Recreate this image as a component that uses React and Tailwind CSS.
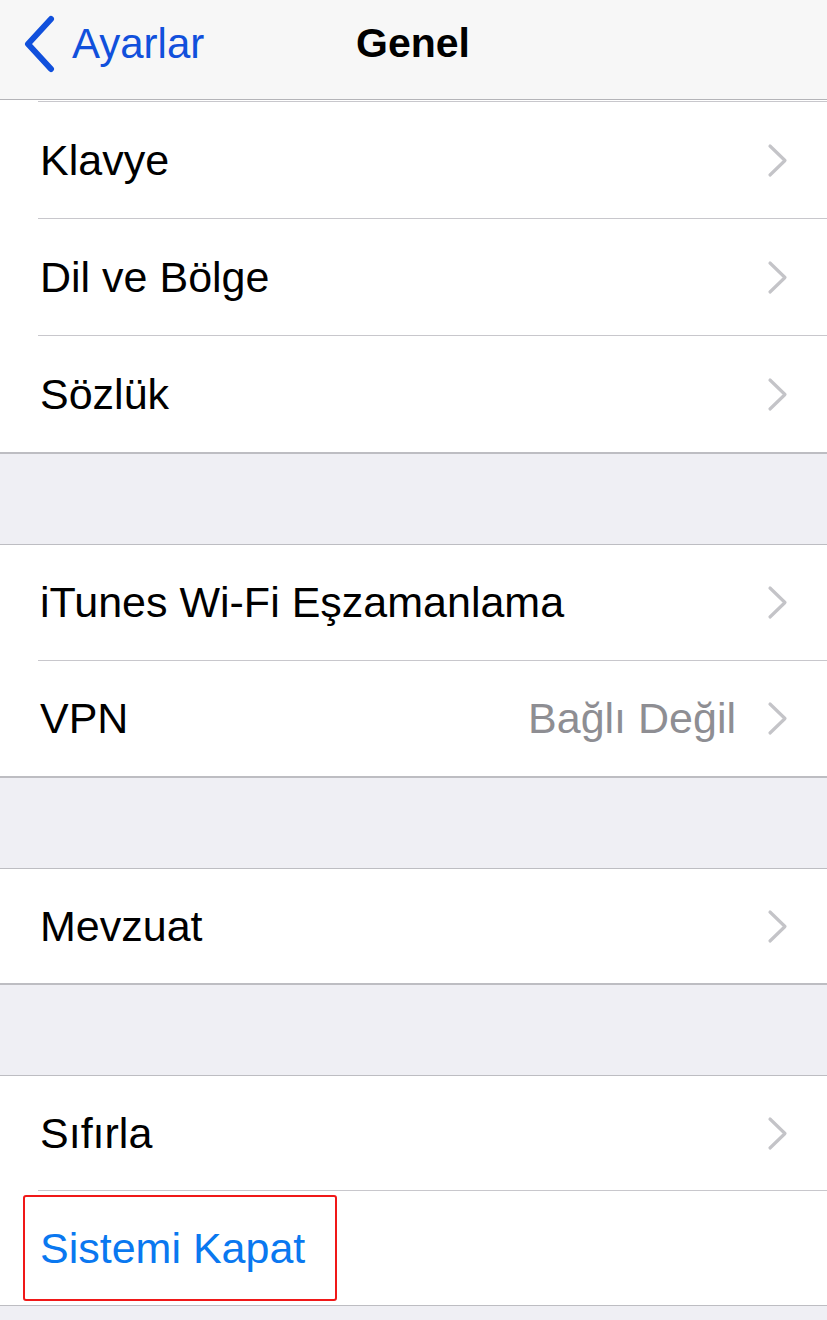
import { Fragment } from 'react';

const font = { fontFamily: '"Liberation Sans", Arial, sans-serif' };

const groups = [
  { h: 'h-[116px]', rows: [{ label: 'Klavye' }, { label: 'Dil ve Bölge' }, { label: 'Sözlük' }] },
  { h: 'h-[115px]', rows: [{ label: 'iTunes Wi-Fi Eşzamanlama' }, { label: 'VPN', value: 'Bağlı Değil' }] },
  { h: 'h-[114px]', rows: [{ label: 'Mevzuat' }] },
  { h: 'h-[114px]', rows: [{ label: 'Sıfırla' }, { label: 'Sistemi Kapat', action: true }] },
];

const Chevron = () => (
  <svg width="24" height="35" viewBox="0 0 24 35" className="shrink-0">
    <path d="M4 3 L19 17.5 L4 32" fill="none" stroke="#c4c4c8" strokeWidth="3.2" strokeLinecap="round" strokeLinejoin="round" />
  </svg>
);

const Row = ({ row, h }) => {
  if (row.action) {
    return (
      <div className={`${h} flex items-center pl-[23px]`}>
        <div className="h-[106px] w-[314px] rounded-[3px] border-2 border-[#f01818] flex items-center pl-[15px]">
          <span className="text-[43px] text-[#0a78f0] leading-none">{row.label}</span>
        </div>
      </div>
    );
  }
  return (
    <div className={`${h} flex items-center pl-[40px] pr-[37px]`}>
      <span className="text-[43px] text-black leading-none">{row.label}</span>
      <div className="ml-auto flex items-center gap-[30px]">
        {row.value && <span className="text-[43px] text-[#8e8e93] leading-none">{row.value}</span>}
        <Chevron />
      </div>
    </div>
  );
};

export default function App() {
  return (
    <div className="w-[827px] h-[1320px] overflow-hidden bg-[#efeff4]" style={font}>
      {/* nav bar */}
      <div className="h-[100px] bg-[#f7f7f7] border-b border-[#b4b4b8] flex items-center pb-[12px] relative">
        <div className="flex items-center pl-[22px] gap-[16px]">
          <svg width="34" height="58" viewBox="0 0 34 58">
            <path d="M29 4 L6 29 L29 54" fill="none" stroke="#1150dc" strokeWidth="6" strokeLinecap="round" strokeLinejoin="round" />
          </svg>
          <span className="text-[42px] text-[#1150dc] leading-none">Ayarlar</span>
        </div>
        <span className="absolute left-[356px] text-[41px] font-bold text-black leading-none">Genel</span>
      </div>

      {groups.map((g, gi) => (
        <Fragment key={gi}>
          {gi > 0 && <div className="h-[91px] border-t border-[#bdbdc2]" />}
          <div className={`bg-white border-b border-[#bdbdc2] ${gi > 0 ? 'border-t' : ''}`}>
            {gi === 0 && (
              <div className="pt-px">
                <div className="ml-[38px] h-px bg-[#c8c7cc]" />
              </div>
            )}
            {g.rows.map((row, ri) => (
              <Fragment key={row.label}>
                {ri > 0 && <div className="ml-[38px] h-px bg-[#c8c7cc]" />}
                <Row row={row} h={g.h} />
              </Fragment>
            ))}
          </div>
        </Fragment>
      ))}
    </div>
  );
}
